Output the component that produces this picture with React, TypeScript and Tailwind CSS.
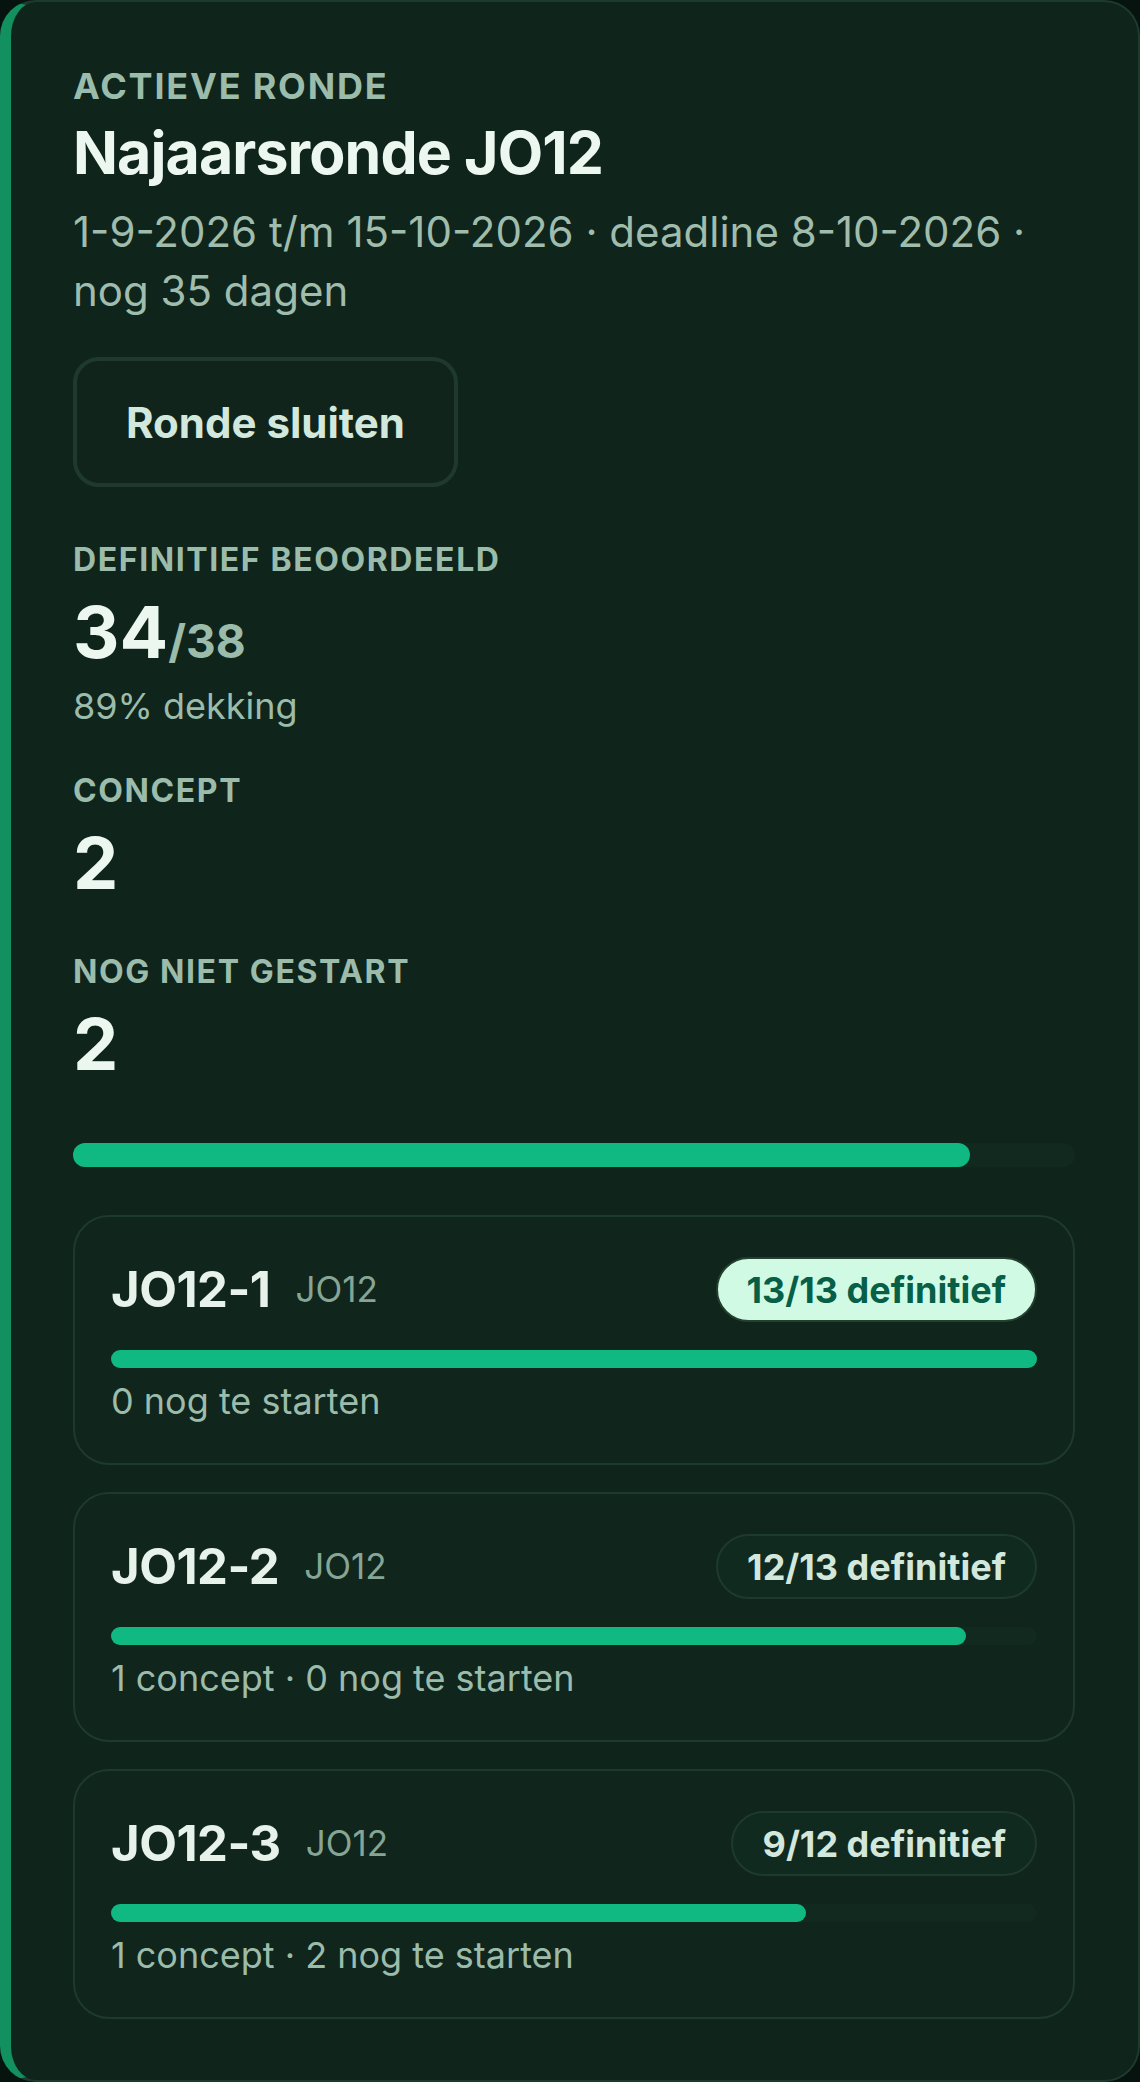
const teams = [
  { name: "JO12-1", group: "JO12", done: 13, total: 13, concept: 0, open: 0 },
  { name: "JO12-2", group: "JO12", done: 12, total: 13, concept: 1, open: 0 },
  { name: "JO12-3", group: "JO12", done: 9, total: 12, concept: 1, open: 2 },
];

const Stat = ({ label, children }: { label: string; children: React.ReactNode }) => (
  <div>
    <div className="text-[32px] leading-[40px] font-bold uppercase tracking-[0.05em] text-[#9cbcab]">
      {label}
    </div>
    {children}
  </div>
);

const TeamCard = ({ team }: { team: (typeof teams)[number] }) => {
  const complete = team.done === team.total;
  const pct = (team.done / team.total) * 100;
  const parts: string[] = [];
  if (team.concept > 0) parts.push(`${team.concept} concept`);
  parts.push(`${team.open} nog te starten`);

  return (
    <div className="rounded-[36px] border-2 border-[#1e3a2d] bg-[#10251c] px-[36px] pt-[40px] pb-[40px]">
      <div className="flex h-[65px] items-center justify-between">
        <div className="flex items-center gap-[25px]">
          <span className="text-[49px] font-bold tracking-[-0.01em] text-[#e6f2ea]">
            {team.name}
          </span>
          <span className="text-[35px] text-[#86a595]">{team.group}</span>
        </div>
        <span
          className={
            complete
              ? "flex h-[65px] items-center rounded-full border-2 border-[#24402f] bg-[#d1fae5] px-[29px] text-[36px] font-bold text-[#065f46]"
              : "flex h-[65px] items-center rounded-full border-2 border-[#1e3a2d] bg-[#112a20] px-[29px] text-[36px] font-bold text-[#d3e8dc]"
          }
        >
          {team.done}/{team.total} definitief
        </span>
      </div>
      <div className="mt-[28px] h-[18px] w-full rounded-full bg-[#12291f]">
        <div className="h-full rounded-full bg-[#10b981]" style={{ width: `${pct}%` }} />
      </div>
      <div className="mt-[11px] text-[36px] leading-[44px] text-[#9cbcab]">{parts.join(" · ")}</div>
    </div>
  );
};

export default function App() {
  const done = 34;
  const total = 38;
  return (
    <div className="min-h-screen bg-[#07130e] font-['Inter',sans-serif]">
      <div className="rounded-[36px] border-2 border-l-[11px] border-[#1e3a2d] border-l-[#13905f] bg-[#0f241b] pt-[64px] pr-[63px] pb-[61px] pl-[62px]">
        <div className="text-[36px] leading-[40px] font-bold uppercase tracking-[0.05em] text-[#9cbcab]">
          Actieve ronde
        </div>
        <h1 className="mt-[13px] text-[59px] leading-[68px] font-bold tracking-[-0.015em] text-[#ecf7f0]">
          Najaarsronde JO12
        </h1>
        <p className="mt-[15px] text-[42px] leading-[59px] text-[#9fbcad]">
          1-9-2026 t/m 15-10-2026 · deadline 8-10-2026 · nog 35 dagen
        </p>
        <button className="mt-[37px] h-[130px] rounded-[26px] border-4 border-[#1f3a2d] bg-[#10241b] px-[49px] text-[42px] font-bold text-[#d3e8dc]">
          Ronde sluiten
        </button>

        <div className="mt-[53px] flex flex-col">
          <Stat label="Definitief beoordeeld">
            <div className="mt-[16px] flex items-baseline">
              <span className="text-[72px] leading-[72px] font-bold text-[#ecf7f0]">{done}</span>
              <span className="text-[46px] leading-none font-bold text-[#9cbcab]">/{total}</span>
            </div>
            <div className="mt-[16px] text-[36px] leading-[44px] text-[#9cbcab]">89% dekking</div>
          </Stat>
          <div className="mt-[43px]">
            <Stat label="Concept">
              <div className="mt-[16px] text-[72px] leading-[72px] font-bold text-[#ecf7f0]">2</div>
            </Stat>
          </div>
          <div className="mt-[53px]">
            <Stat label="Nog niet gestart">
              <div className="mt-[16px] text-[72px] leading-[72px] font-bold text-[#ecf7f0]">2</div>
            </Stat>
          </div>
        </div>

        <div className="mt-[63px] h-[24px] w-full rounded-full bg-[#12291f]">
          <div className="h-full rounded-full bg-[#10b981]" style={{ width: `${(done / total) * 100}%` }} />
        </div>

        <div className="mt-[48px] flex flex-col gap-[27px]">
          {teams.map((t) => (
            <TeamCard key={t.name} team={t} />
          ))}
        </div>
      </div>
    </div>
  );
}
